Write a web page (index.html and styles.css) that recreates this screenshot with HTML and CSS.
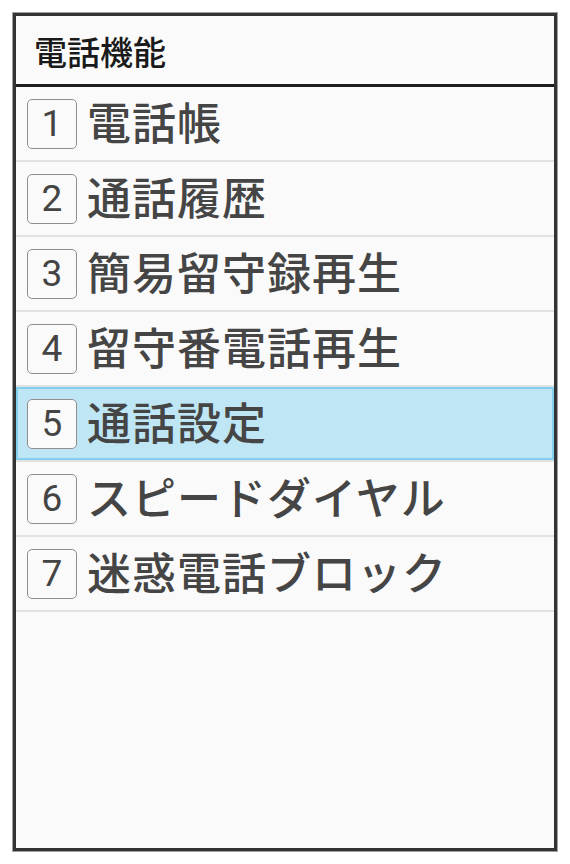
FILE: index.html
```html
<!DOCTYPE html>
<html lang="ja">
<head>
<meta charset="utf-8">
<link rel="stylesheet" href="styles.css">
</head>
<body>
<div class="frame">
  <div class="header"><span class="title">電話機能</span></div>
  <ul class="menu">
    <li class="item"><span class="num">1</span><span class="label">電話帳</span></li>
    <li class="item"><span class="num">2</span><span class="label">通話履歴</span></li>
    <li class="item"><span class="num">3</span><span class="label">簡易留守録再生</span></li>
    <li class="item"><span class="num">4</span><span class="label">留守番電話再生</span></li>
    <li class="item active"><span class="num">5</span><span class="label">通話設定</span></li>
    <li class="item"><span class="num">6</span><span class="label">スピードダイヤル</span></li>
    <li class="item"><span class="num">7</span><span class="label">迷惑電話ブロック</span></li>
  </ul>
</div>
</body>
</html>
```
FILE: styles.css
```css
html, body {
  margin: 0;
  padding: 0;
  background: #ffffff;
}
body {
  padding: 13px;
  font-family: "Noto Sans CJK JP", "Noto Sans", sans-serif;
}
.frame {
  box-sizing: border-box;
  width: 544px;
  height: 838px;
  border: 3px solid #333333;
  box-shadow: 0 0 0 1px #a0a0a0;
  background: #fafafa;
}
.header {
  box-sizing: border-box;
  height: 71px;
  border-bottom: 3px solid #1e1e1e;
  display: flex;
  align-items: center;
  padding-left: 18px;
}
.title {
  font-size: 33px;
  font-weight: 500;
  color: #1a1a1a;
  line-height: 1;
  padding-top: 2px;
}
.menu {
  list-style: none;
  margin: 0;
  padding: 0;
}
.item {
  box-sizing: border-box;
  height: 75px;
  border-bottom: 2px solid #e2e2e2;
  display: flex;
  align-items: center;
  padding-left: 11px;
  gap: 10px;
}
.item.active {
  background: #bee6f4;
  box-shadow: inset 0 0 0 2px #83cfee;
}
.num {
  box-sizing: border-box;
  width: 50px;
  height: 50px;
  border: 1.5px solid #8e8e8e;
  border-radius: 5px;
  display: flex;
  align-items: center;
  justify-content: center;
  font-family: Roboto, "Noto Sans", sans-serif;
  font-size: 37px;
  color: #444444;
  line-height: 1;
}
.item.active .num {
  background: #fafafa;
}
.label {
  font-size: 44px;
  font-weight: 500;
  letter-spacing: 1px;
  color: #454545;
  line-height: 1;
  padding-bottom: 6px;
}
```
